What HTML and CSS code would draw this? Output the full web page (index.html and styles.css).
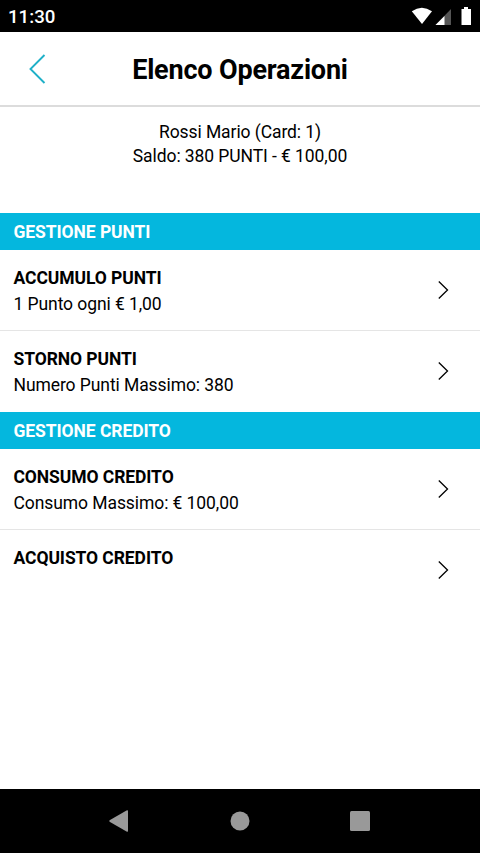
FILE: index.html
```html
<!DOCTYPE html>
<html lang="it">
<head>
    <meta charset="UTF-8">
    <meta name="viewport" content="width=device-width, initial-scale=1.0">
    <title>Elenco Operazioni</title>
    <link rel="stylesheet" href="styles.css">
</head>
<body>
    <div class="status-bar">
        <span class="clock">11:30</span>
        <svg class="status-icons" width="62" height="20" viewBox="0 0 62 20" aria-hidden="true">
            <path d="M2.800 5.300Q12.800-1.800 23 5.300L13 18Z" fill="#fff"/>
            <path d="M42 3V19H26.500Z" fill="#555"/>
            <path d="M35.500 10V19H26.500Z" fill="#fff"/>
            <path d="M52.500 3H55V1H59V3H62V19H52.500Z" fill="#fff"/>
        </svg>
    </div>

    <header class="header">
        <button class="back-button" aria-label="Indietro">
            <svg width="18" height="30" viewBox="0 0 18 30"><path d="M16.500 1L2.500 15L16.500 29"/></svg>
        </button>
        <h1 class="title">Elenco Operazioni</h1>
    </header>

    <main class="content">
        <div class="customer">
            <p>Rossi Mario (Card: 1)</p>
            <p>Saldo: 380 PUNTI - € 100,00</p>
        </div>

        <h2 class="section-title">GESTIONE PUNTI</h2>
        <ul class="list">
            <li class="item">
                <div class="item-text">
                    <h3>ACCUMULO PUNTI</h3>
                    <p>1 Punto ogni € 1,00</p>
                </div>
                <svg class="chevron" width="12" height="20" viewBox="0 0 12 20"><path d="M1.800 1.500L10.500 10L1.800 18.500"/></svg>
            </li>
            <li class="item">
                <div class="item-text">
                    <h3>STORNO PUNTI</h3>
                    <p>Numero Punti Massimo: 380</p>
                </div>
                <svg class="chevron" width="12" height="20" viewBox="0 0 12 20"><path d="M1.800 1.500L10.500 10L1.800 18.500"/></svg>
            </li>
        </ul>

        <h2 class="section-title">GESTIONE CREDITO</h2>
        <ul class="list">
            <li class="item">
                <div class="item-text">
                    <h3>CONSUMO CREDITO</h3>
                    <p>Consumo Massimo: € 100,00</p>
                </div>
                <svg class="chevron" width="12" height="20" viewBox="0 0 12 20"><path d="M1.800 1.500L10.500 10L1.800 18.500"/></svg>
            </li>
            <li class="item">
                <div class="item-text">
                    <h3>ACQUISTO CREDITO</h3>
                </div>
                <svg class="chevron" width="12" height="20" viewBox="0 0 12 20"><path d="M1.800 1.500L10.500 10L1.800 18.500"/></svg>
            </li>
        </ul>
    </main>

    <nav class="nav-bar">
        <svg width="22" height="24" viewBox="0 0 22 24"><path d="M17.500 1.500Q19 .800 19 2V22Q19 23.200 17.500 22.500L1 13Q-.500 12 1 11Z"/></svg>
        <svg width="20" height="20" viewBox="0 0 20 20"><circle cx="10" cy="10" r="9.500"/></svg>
        <svg width="22" height="22" viewBox="0 0 22 22"><rect x="1" y="1" width="20" height="20" rx="1.500"/></svg>
    </nav>
</body>
</html>
```
FILE: styles.css
```css
* {
    margin: 0;
    padding: 0;
    box-sizing: border-box;
}

body {
    height: 853px;
    display: flex;
    flex-direction: column;
    font-family: Roboto, sans-serif;
    font-size: 17.500px;
    letter-spacing: -0.080px;
    color: #000;
    background-color: #fff;
    overflow: hidden;
}

.status-bar {
    height: 32px;
    padding: 0 9px 0 8px;
    display: flex;
    justify-content: space-between;
    align-items: center;
    color: #fff;
    background-color: #000;
}

.clock {
    padding-top: 1px;
    font-size: 18.700px;
    font-weight: 500;
    letter-spacing: 0;
}

.header {
    height: 75px;
    display: grid;
    grid-template-columns: 74px 1fr 74px;
    align-items: center;
    border-bottom: 2px solid #dcdcdc;
}

.back-button {
    display: flex;
    justify-content: center;
    border: none;
    background: none;
}

.back-button svg {
    fill: none;
    stroke: #1fb0c8;
    stroke-width: 1.900;
}

.title {
    padding-top: 2px;
    font-size: 27px;
    font-weight: 700;
    letter-spacing: -0.180px;
    text-align: center;
    white-space: nowrap;
}

.content {
    flex: 1;
}

.customer {
    height: 106px;
    padding-top: 14px;
    line-height: 23.500px;
    text-align: center;
}

.section-title {
    height: 37px;
    padding-left: 13.500px;
    font-size: 17.500px;
    font-weight: 700;
    line-height: 38px;
    color: #fff;
    background-color: #04b7de;
}

.list {
    list-style: none;
}

.item {
    height: 81px;
    padding: 15px 31px 0 13.500px;
    display: flex;
    justify-content: space-between;
    border-bottom: 1px solid #e5e5e5;
}

.item:last-child {
    border-bottom: none;
}

.item-text {
    line-height: 26px;
}

.item-text h3 {
    font-size: 17.500px;
    font-weight: 700;
}

.chevron {
    margin-top: 15px;
    fill: none;
    stroke: #000;
    stroke-width: 1.300;
}

.nav-bar {
    height: 64px;
    padding: 0 109px;
    display: flex;
    justify-content: space-between;
    align-items: center;
    background-color: #000;
    fill: #999;
}
```
